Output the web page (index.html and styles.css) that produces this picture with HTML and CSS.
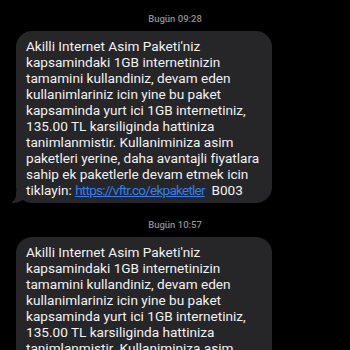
FILE: index.html
```html
<!DOCTYPE html>
<html lang="tr">
<head>
  <meta charset="UTF-8">
  <meta name="viewport" content="width=device-width, initial-scale=1.0">
  <title>Mesajlar</title>
  <link rel="stylesheet" href="styles.css">
</head>
<body>
  <main class="thread">
    <div class="stamp">Bugün 09:28</div>
    <div class="bubble">
      Akilli Internet Asim Paketi'niz kapsamindaki 1GB internetinizin tamamini kullandiniz, devam eden kullanimlariniz icin yine bu paket kapsaminda yurt ici 1GB internetiniz, 135.00 TL karsiliginda hattiniza tanimlanmistir. Kullaniminiza asim paketleri yerine, daha avantajli fiyatlara sahip ek paketlerle devam etmek icin tiklayin: <a class="link" href="#">https://vftr.co/ekpaketler</a>&nbsp; B003
    </div>
    <div class="stamp">Bugün 10:57</div>
    <div class="bubble">
      Akilli Internet Asim Paketi'niz kapsamindaki 1GB internetinizin tamamini kullandiniz, devam eden kullanimlariniz icin yine bu paket kapsaminda yurt ici 1GB internetiniz, 135.00 TL karsiliginda hattiniza tanimlanmistir. Kullaniminiza asim paketleri yerine, daha avantajli fiyatlara sahip ek paketlerle devam etmek icin tiklayin: <a class="link" href="#">https://vftr.co/ekpaketler</a>&nbsp; B003
    </div>
  </main>
</body>
</html>
```
FILE: styles.css
```css
body {
  margin: 0;
  background: #000;
  font-family: Roboto, "Noto Sans", sans-serif;
  overflow: hidden;
}

.thread {
  padding-top: 13px;
}

.stamp {
  text-align: center;
  color: #8e8e93;
  font-size: 9.5px;
  font-weight: 500;
  line-height: 11px;
  margin-bottom: 7px;
}

.bubble {
  position: relative;
  width: 237px;
  margin: 0 0 16px 16px;
  padding: 7px 9px 5px 10px;
  background: #262628;
  border-radius: 16px;
  color: #f2f2f2;
  font-size: 13.6px;
  line-height: 16px;
}

.bubble::before {
  content: "";
  position: absolute;
  left: -4px;
  bottom: 0;
  width: 14px;
  height: 12px;
  background: #262628;
  border-bottom-right-radius: 12px 10px;
}

.bubble::after {
  content: "";
  position: absolute;
  left: -8px;
  bottom: 0;
  width: 8px;
  height: 12px;
  background: #000;
  border-bottom-right-radius: 8px;
}

.link {
  color: #2f7ff0;
  letter-spacing: -0.8px;
}
```
